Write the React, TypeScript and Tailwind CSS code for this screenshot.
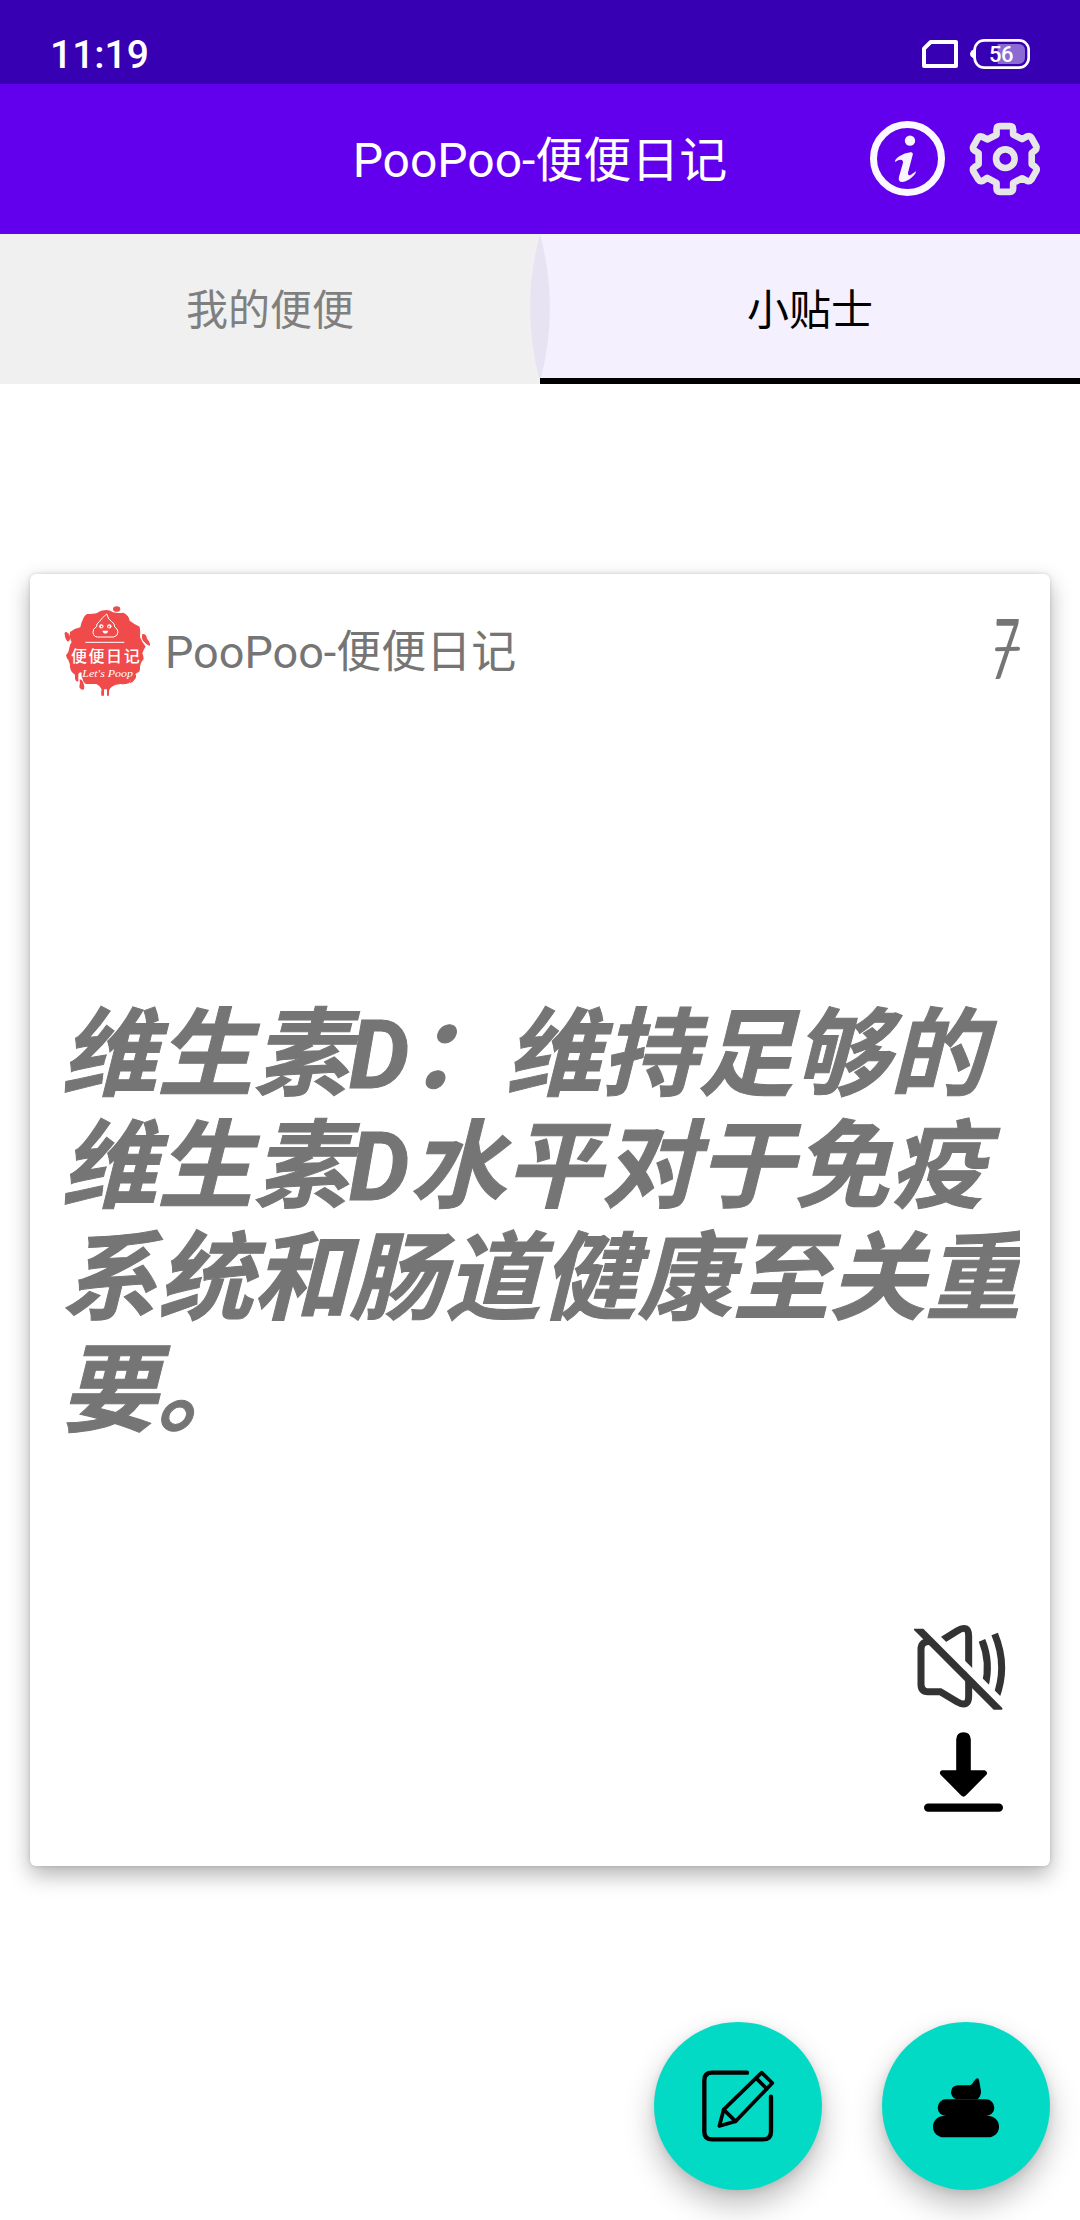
const FONT = "font-['Roboto','Noto_Sans_CJK_SC',sans-serif]";

function StatusBar() {
  return (
    <div className="flex h-[84px] items-start justify-between bg-[#3700b3] pl-[50px] pr-[50px] text-white">
      <span className="mt-[32px] text-[39px] leading-[46px] font-medium">11:19</span>
      <div className="mt-[39px] flex h-[30px] items-center">
        <svg viewBox="246 120 108 84" className="h-[28px] w-[36px]">
          <path d="M252 198V146L272 126H348V198Z" fill="none" stroke="#fff" strokeWidth="12" strokeLinejoin="round" />
        </svg>
        <div className="relative ml-[12px] h-[30px] w-[60px]">
          <svg viewBox="390 117 180 90" className="h-[30px] w-[60px]">
            <path d="M402 148Q390 154 390 162Q390 170 402 176Z" fill="#fff" />
            <rect x="404" y="121" width="162" height="82" rx="29" fill="none" stroke="#fff" strokeWidth="8" />
            <path d="M473 132H535Q555 132 555 152V172Q555 192 535 192H473Z" fill="#fff" fillOpacity="0.42" />
          </svg>
          <span className="absolute left-[19px] top-[3px] text-[22px] leading-[26px] font-medium tracking-[-0.5px]">56</span>
        </div>
      </div>
    </div>
  );
}

function InfoIcon() {
  return (
    <svg viewBox="90 363 225 225" className="h-[75px] w-[75px]" fill="#f8f5ff">
      <circle cx="202.500" cy="475.500" r="102" fill="none" stroke="#fbf9ff" strokeWidth="21" />
      <circle cx="210" cy="422" r="15.500" />
      <path d="M165 486Q164 478 178 469Q194 459 211 457Q220 456 218 465L204 518Q203 529 213 524L228 514Q229 519 219 529Q203 545 187 546Q173 546 177 530L189 488Q190 480 182 479Q175 479 165 486Z" />
    </svg>
  );
}

function GearIcon() {
  return (
    <svg viewBox="385 363 220 225" className="h-[75px] w-[73px]" fill="none" stroke="#e6e6e6" strokeWidth="20" strokeLinejoin="round">
      <path d="M471 404V388Q471 378 481 378H511Q521 378 521 388V403L548 417L563 409Q572 406 577 414L591 439Q593 447 587 451L577 459V493L588 501Q594 506 591 513L577 538Q571 546 563 543L548 535L521 549V566Q521 576 511 576H481Q471 576 471 566V549L443 534L429 543Q421 546 416 539L401 514Q398 506 404 502L417 493V459L404 451Q398 447 401 439L415 414Q420 406 428 410L443 418Z" />
      <circle cx="497.500" cy="476" r="28" />
    </svg>
  );
}

function AppBar() {
  return (
    <div className="relative flex h-[150px] items-center justify-center bg-[#6200ee] text-white">
      <h1 className="mt-[4px] text-[48px] leading-[60px] font-normal">PooPoo-便便日记</h1>
      <div className="absolute right-[39px] top-[37px] flex gap-[23px]">
        <InfoIcon />
        <GearIcon />
      </div>
    </div>
  );
}

function Tabs() {
  return (
    <div className="relative grid h-[150px] grid-cols-2 text-[42px]">
      <div className="flex items-center justify-center bg-[#f0f0f0] pt-[2px] text-[#7f7f7f]">我的便便</div>
      <div className="flex items-center justify-center border-b-[6px] border-black bg-[#f4f0fe] pt-[8px] text-black">小贴士</div>
      <svg viewBox="0 0 20 144" className="absolute left-[530px] top-0 h-[144px] w-[20px]">
        <path d="M10 0A286 286 0 0 0 9 144H11A286 286 0 0 0 10 0Z" fill="#e7e3f2" />
      </svg>
    </div>
  );
}

function Logo() {
  return (
    <svg viewBox="0 0 315 330" className="h-[110px] w-[105px]">
      <g fill="#f04a4a">
        <path d="M153 42Q164 42 174 49Q190 53 205 50Q222 58 224 74Q240 86 254 92Q257 108 255 124Q262 140 272 152Q266 158 262 172Q266 180 266 190Q258 196 255 212Q256 222 252 228Q240 232 238 242Q228 248 222 262Q208 266 196 264Q178 266 170 273Q164 276 162 284V299H156V280H147V299H139Q137 290 140 280Q134 268 124 264H92Q84 258 82 247Q78 240 80 230Q74 226 70 234V256Q62 258 60 248V236Q48 230 45 214Q46 204 40 192Q34 186 33 178Q42 170 43 156Q44 146 50 138Q42 124 45 108Q58 98 76 94Q78 80 82 74Q88 58 96 54Q116 54 124 52Q138 42 153 42Z" />
        <ellipse cx="185" cy="39" rx="11" ry="8.500" />
        <path d="M31 107Q40 108 46 124Q46 134 38 137Q29 128 29 112Z" />
        <path d="M262 114Q274 112 276 128Q286 138 285 149Q276 148 268 138Q258 132 262 114Z" />
        <path d="M74 250Q82 250 84 258Q90 270 87 280Q78 284 73 274Q76 262 74 250Z" />
        <path d="M240 234Q247 240 240 250Q234 260 224 262Q228 244 240 234Z" />
      </g>
      <g fill="none" stroke="#fff" strokeWidth="3">
        <path d="M155 54Q140 66 134 76Q122 84 125 92Q112 98 114 110Q116 123 128 123H176Q188 121 189 108Q188 98 179 93Q180 82 170 77Q160 72 155 54Z" strokeLinejoin="round" />
        <path d="M91 139H208" />
      </g>
      <g fill="#fff">
        <circle cx="139" cy="91" r="6.500" />
        <circle cx="163" cy="91" r="6.500" />
        <path d="M142 104H160Q158 112 151 113Q144 112 142 104Z" />
      </g>
      <g fill="#f04a4a">
        <circle cx="140" cy="92" r="2.500" />
        <circle cx="162" cy="92" r="2.500" />
      </g>
      <text x="48" y="198" fill="#fff" fontSize="48" fontWeight="500" textLength="206" fontFamily="'Noto Sans CJK SC', sans-serif">
        便便日记
      </text>
      <text x="82" y="244" fill="#fff" fontSize="30" fontWeight="400" fontStyle="italic" textLength="152" lengthAdjust="spacingAndGlyphs" fontFamily="'Liberation Serif', serif">
        Let's Poop
      </text>
    </svg>
  );
}

function MuteIcon() {
  return (
    <svg viewBox="100 70 282 260" className="h-[86.670px] w-[94px]">
      <g fill="none" stroke="#333" strokeWidth="21">
        <path d="M152 123Q124 121 124 146V250Q124 273 144 273H182L232 303Q267 323 267 286V236" />
        <path d="M179 124L232 91Q267 70 267 106V216" />
        <path d="M307 119Q334 185 316 258" />
        <path d="M345 100Q385 196 349 291" />
      </g>
      <path d="M131 84H160L412 336H382L368 322Z" fill="#fff" />
      <path d="M103 84H131L368 322V327H342L103 88Z" fill="#333" />
    </svg>
  );
}

function DownloadIcon() {
  return (
    <svg viewBox="130 396 238 240" className="h-[80px] w-[79px]">
      <path d="M227 418Q228 396 249 396Q270 396 271 418V511H313Q324 516 318 524L256 587Q249 594 242 587L180 524Q174 515 184 511H227Z" />
      <rect x="130" y="611" width="238" height="25" rx="12.500" />
    </svg>
  );
}

function TipCard() {
  return (
    <div className="mx-[30px] mt-[190px] flex h-[1292px] flex-col rounded-[6px] bg-white pl-[36px] pr-[30px] text-[#757575] shadow-[0_9px_22px_rgba(0,0,0,0.3),0_0_4px_rgba(0,0,0,0.15)]">
      <div className="flex h-[152px] items-center">
        <div className="-ml-[11px] mt-[1px] h-[110px] w-[105px] shrink-0">
          <Logo />
        </div>
        <span className="ml-[5px] mt-[5px] text-[45px] leading-[60px]">PooPoo-便便日记</span>
        <div className="relative ml-auto h-[90px] w-[32px]">
          <span className="absolute left-[3px] top-0 inline-block origin-left scale-x-[0.58] font-['Lato',sans-serif] text-[84px] leading-[84px] italic">7</span>
          <i className="absolute left-[7px] top-[42px] h-[4px] w-[25px] -rotate-2 rounded-full bg-[#757575]" />
        </div>
      </div>
      <p className="mt-[273px] -ml-[5px] w-[959px] overflow-hidden whitespace-nowrap text-[96px] leading-[112px] font-bold italic [-webkit-text-stroke:1px_#757575]">
        维生素D：维持足够的
        <br />
        维生素D水平对于免疫
        <br />
        系统和肠道健康至关重
        <br />
        要。
      </p>
      <div className="mt-auto mb-[54px] mr-[13px] flex flex-col items-end gap-[21px]">
        <MuteIcon />
        <div className="mr-[4px]">
          <DownloadIcon />
        </div>
      </div>
    </div>
  );
}

function EditIcon() {
  return (
    <svg viewBox="180 204 228 228" className="h-[76px] w-[76px]" fill="none" stroke="#000" strokeWidth="13" strokeLinecap="round" strokeLinejoin="round">
      <path d="M321 218H216Q193 218 193 241V395Q193 418 216 418H369Q393 418 393 395V290" />
      <path d="M365 218L397 249L287 364L238 378L251 329Z" strokeWidth="11" />
      <path d="M251 329L287 364M350 236L380 266" strokeWidth="11" />
    </svg>
  );
}

function PoopIcon() {
  return (
    <svg viewBox="879 233 198 178" className="h-[59.330px] w-[66px]">
      <rect x="879" y="347" width="198" height="64" rx="32" />
      <rect x="893" y="297" width="170" height="50" rx="25" />
      <path d="M953 255H985Q996 255 1000 245L1008 235Q1014 231 1017 238L1023 272V276Q1022 290 1012 297H948Q933 290 933 276Q934 257 953 255Z" />
    </svg>
  );
}

function Fab({ children }: { children: React.ReactNode }) {
  return (
    <button className="flex h-[168px] w-[168px] items-center justify-center rounded-full bg-[#03dac5] shadow-[0_15px_30px_rgba(0,0,0,0.25),0_2px_8px_rgba(0,0,0,0.1)]">
      {children}
    </button>
  );
}

export default function App() {
  return (
    <div className={`${FONT} h-[2220px] w-[1080px] overflow-hidden bg-white`}>
      <StatusBar />
      <AppBar />
      <Tabs />
      <TipCard />
      <div className="mt-[156px] mr-[30px] flex justify-end gap-[60px]">
        <Fab>
          <EditIcon />
        </Fab>
        <Fab>
          <div className="mt-[4px]">
            <PoopIcon />
          </div>
        </Fab>
      </div>
    </div>
  );
}
